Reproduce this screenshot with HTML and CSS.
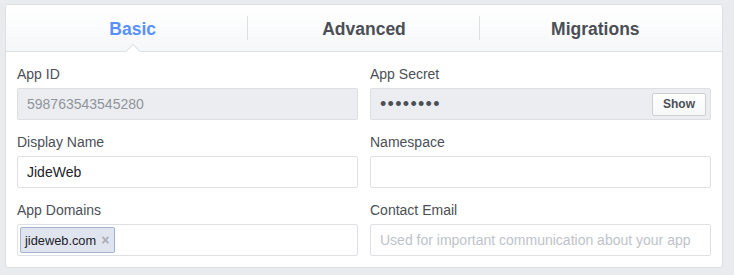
FILE: index.html
```html
<!DOCTYPE html>
<html lang="en">
<head>
    <meta charset="UTF-8">
    <meta name="viewport" content="width=device-width, initial-scale=1.0">
    <title>App Settings</title>
    <link rel="stylesheet" href="styles.css">
</head>
<body>
    <div class="card">
        <div class="tabs">
            <div class="tab active">Basic</div>
            <div class="tab">Advanced</div>
            <div class="tab">Migrations</div>
        </div>
        <div class="form">
            <div class="field">
                <label>App ID</label>
                <input class="input disabled" type="text" value="598763543545280" disabled>
            </div>
            <div class="field">
                <label>App Secret</label>
                <div class="input disabled secret">
                    <span class="dots">••••••••</span>
                    <button class="show-button">Show</button>
                </div>
            </div>
            <div class="field">
                <label>Display Name</label>
                <input class="input" type="text" value="JideWeb">
            </div>
            <div class="field">
                <label>Namespace</label>
                <input class="input" type="text">
            </div>
            <div class="field">
                <label>App Domains</label>
                <div class="input tokens">
                    <span class="token">jideweb.com <span class="remove">×</span></span>
                </div>
            </div>
            <div class="field">
                <label>Contact Email</label>
                <input class="input" type="text" placeholder="Used for important communication about your app">
            </div>
        </div>
    </div>
</body>
</html>
```

FILE: styles.css
```css
* {
    margin: 0;
    padding: 0;
    box-sizing: border-box;
}
body {
    font-family: 'Liberation Sans', Arial, sans-serif;
    background: #e9ebee;
    padding: 4px 0 0 5px;
}
.card {
    width: 718px;
    background: #fff;
    border: 1px solid #dddfe2;
    border-radius: 3px;
}
.tabs {
    display: flex;
    height: 47px;
    padding: 0 11px;
    background: linear-gradient(#fff, #f6f7f9);
    border-bottom: 1px solid #dddfe2;
    border-radius: 3px 3px 0 0;
}
.tab {
    flex: 1;
    display: flex;
    justify-content: center;
    align-items: center;
    position: relative;
    padding-top: 3px;
    font-size: 17.5px;
    font-weight: bold;
    color: #4b4f56;
}
.tab + .tab::before {
    content: '';
    position: absolute;
    left: -1px;
    top: 11px;
    height: 24px;
    border-left: 1px solid #dddfe2;
}
.tab.active {
    color: #5890ff;
}
.tab.active::after {
    content: '';
    position: absolute;
    left: 50%;
    bottom: -6px;
    width: 10px;
    height: 10px;
    background: #fff;
    border-top: 1px solid #dddfe2;
    border-left: 1px solid #dddfe2;
    transform: translateX(-50%) rotate(45deg);
}
.form {
    display: grid;
    grid-template-columns: 1fr 1fr;
    column-gap: 12px;
    row-gap: 13px;
    padding: 13px 11px 11px;
}
.field label {
    display: block;
    font-size: 14px;
    line-height: 18px;
    color: #4b4f56;
    margin-bottom: 5px;
}
.input {
    display: flex;
    align-items: center;
    width: 100%;
    height: 32px;
    padding: 0 9px;
    border: 1px solid #dddfe2;
    border-radius: 2px;
    background: #fff;
    font-family: inherit;
    font-size: 14px;
    color: #1d2129;
    outline: none;
}
.input::placeholder {
    color: #bec3c9;
}
.input.disabled {
    background: #ebedf0;
    color: #90949c;
}
.secret {
    justify-content: space-between;
    padding-right: 4px;
}
.dots {
    color: #4b4f56;
    font-size: 18px;
    letter-spacing: 1.3px;
}
.show-button {
    height: 23px;
    padding: 0 10px;
    font-family: inherit;
    font-size: 12px;
    font-weight: bold;
    color: #4b4f56;
    background: linear-gradient(#fff, #f6f7f9);
    border: 1px solid #ccd0d5;
    border-radius: 2px;
}
.tokens {
    padding: 0 2px;
}
.token {
    display: flex;
    align-items: center;
    height: 26px;
    padding: 0 5px 0 4px;
    background: #dfe4ee;
    border: 1px solid #a3b3cf;
    border-radius: 2px;
    font-size: 12.8px;
    color: #1d2129;
}
.remove {
    margin-left: 5px;
    font-size: 14px;
    font-weight: bold;
    color: #a7adb6;
}
```
